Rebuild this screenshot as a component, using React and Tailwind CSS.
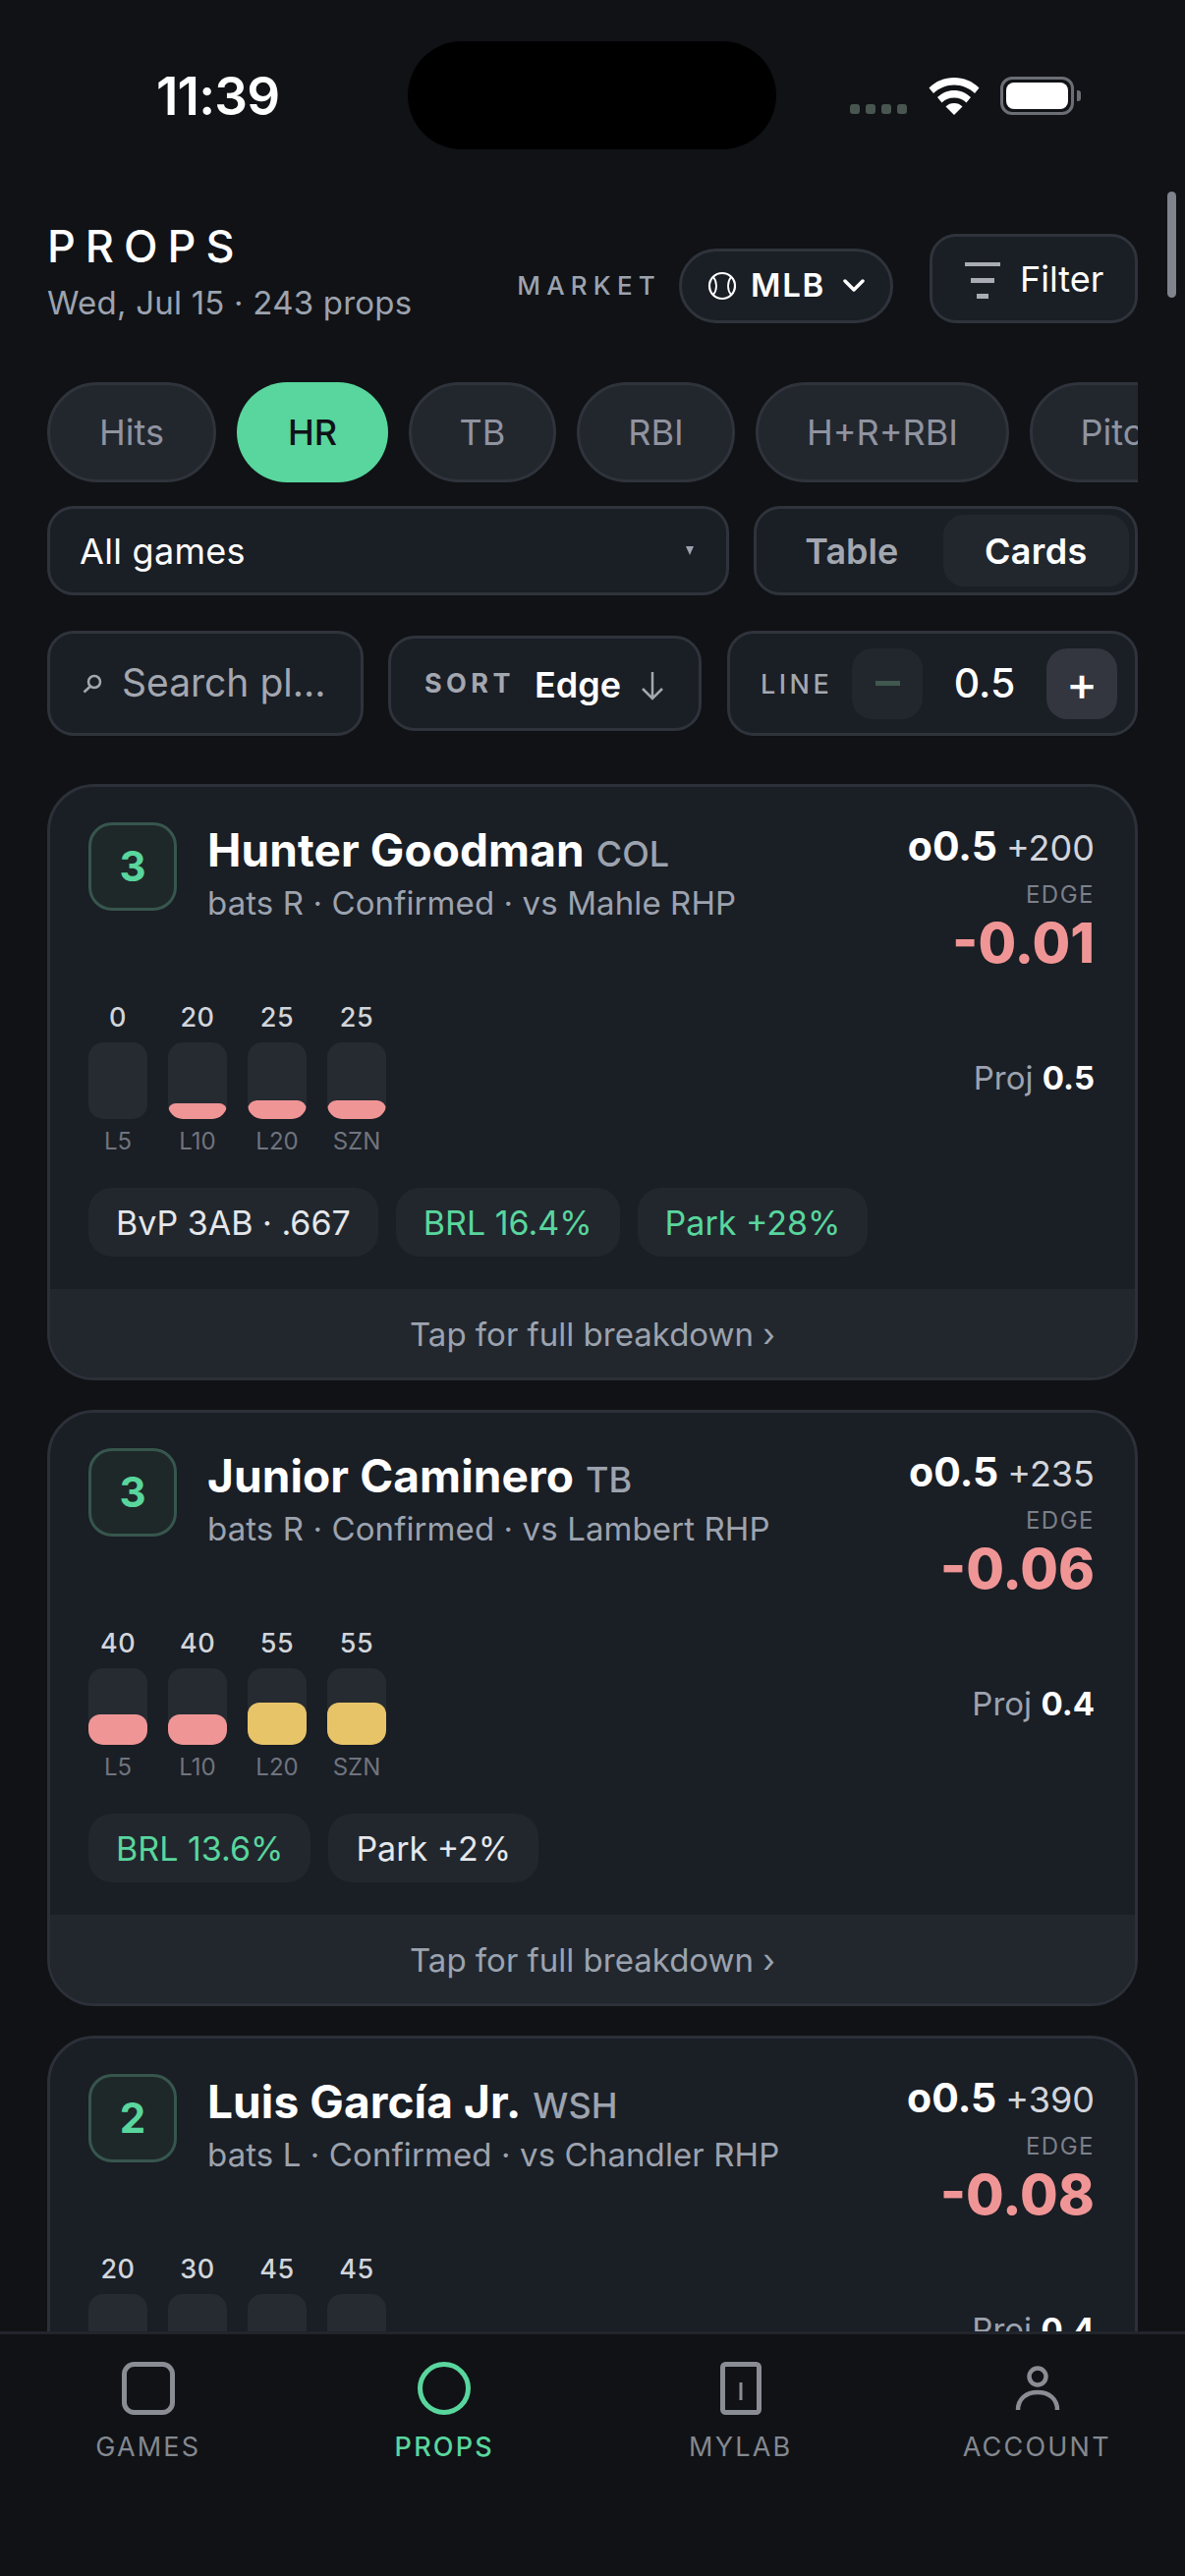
const cards = [
  { rank: 3, name: "Hunter Goodman", team: "COL", sub: "bats R · Confirmed · vs Mahle RHP", odds: "+200", edge: "-0.01", proj: "0.5",
    bars: [["0", 0, "L5"], ["20", 16, "L10"], ["25", 19, "L20"], ["25", 19, "SZN"]],
    chips: [["BvP 3AB · .667", false], ["BRL 16.4%", true], ["Park +28%", true]] },
  { rank: 3, name: "Junior Caminero", team: "TB", sub: "bats R · Confirmed · vs Lambert RHP", odds: "+235", edge: "-0.06", proj: "0.4",
    bars: [["40", 31, "L5"], ["40", 31, "L10"], ["55", 43, "L20"], ["55", 43, "SZN"]],
    chips: [["BRL 13.6%", true], ["Park +2%", false]] },
  { rank: 2, name: "Luis García Jr.", team: "WSH", sub: "bats L · Confirmed · vs Chandler RHP", odds: "+390", edge: "-0.08", proj: "0.4",
    bars: [["20", 16, "L5"], ["30", 23, "L10"], ["45", 35, "L20"], ["45", 35, "SZN"]],
    chips: [["BRL 11.2%", true], ["Park +5%", false]] },
];

function Card({ c }) {
  return (
    <div className="shrink-0 rounded-[48px] border-[3px] border-[#2c3038] bg-[#1a1e25] overflow-hidden">
      <div className="px-[39px] pt-[36px] pb-[33px]">
        <div className="flex justify-between h-[174px]">
          <div className="flex">
            <div className="w-[90px] h-[90px] rounded-[24px] border-[3px] border-[#37564d] bg-[#1e2829] flex items-center justify-center text-[42px] font-bold text-[#59d69d] leading-none">{c.rank}</div>
            <div className="ml-[31px] mt-[3px]">
              <div className="flex items-baseline leading-[50px]">
                <span className="text-[46px] tracking-[0.1px] font-bold text-white">{c.name}</span>
                <span className="ml-[12px] text-[36px] font-medium text-[#9ca3af]">{c.team}</span>
              </div>
              <div className="mt-[3px] text-[33px] tracking-[0.1px] leading-[44px] text-[#9ca3af]">{c.sub}</div>
            </div>
          </div>
          <div className="flex flex-col items-end mr-[2px]">
            <div className="flex items-baseline leading-[50px] -mt-[1px]">
              <span className="text-[41px] font-bold text-white">o0.5</span>
              <span className="ml-[9px] text-[36px] text-[#d1d5db]">{c.odds}</span>
            </div>
            <div className="mt-[9px] text-[24px] leading-[28px] tracking-[1.5px] text-[#7b808a]">EDGE</div>
            <div className="mt-[2px] text-[56px] font-extrabold leading-[66px] text-[#f09595]">{c.edge}</div>
          </div>
        </div>
        <div className="mt-[9px] flex justify-between items-center">
          <div className="flex gap-[21px]">
            {c.bars.map(([v, h, l]) => (
              <div key={l} className="w-[60px] flex flex-col items-center">
                <div className="text-[27px] leading-[32px] tracking-[0.5px] font-medium text-[#d1d5db]">{v}</div>
                <div className="mt-[9px] w-[60px] h-[78px] rounded-[15px] bg-[#262a31] overflow-hidden flex items-end">
                  <div
                    className={(parseInt(v) >= 50 ? "bg-[#e7c468]" : "bg-[#f09595]") + " w-full rounded-[12px]"}
                    style={{ height: h }}
                  />
                </div>
                <div className="mt-[9px] text-[24px] leading-[28px] text-[#6f747e] whitespace-nowrap">{l}</div>
              </div>
            ))}
          </div>
          <div className="text-[33px] text-[#9ca3af] mr-[2px]">Proj <span className="font-bold text-white">{c.proj}</span></div>
        </div>
        <div className="mt-[33px] flex gap-[18px]">
          {c.chips.map(([t, g]) => (
            <div key={t} className={"h-[70px] px-[28px] rounded-[24px] bg-[#22272e] flex items-center text-[34px] " + (g ? "text-[#59d69d]" : "text-[#e5e7eb]")}>{t}</div>
          ))}
        </div>
      </div>
      <div className="h-[90px] pt-[4px] bg-[#22272e] flex items-center justify-center text-[33px] text-[#9ca3af]">Tap for full breakdown ›</div>
    </div>
  );
}

const tabs = [
  ["Hits", "w-[172px]"],
  ["HR", "w-[154px]"],
  ["TB", "w-[150px]"],
  ["RBI", "w-[161px]"],
  ["H+R+RBI", "w-[258px]"],
  ["Pitcher Ks", "w-[276px]"],
];

function NavIcon({ children, active }) {
  return (
    <svg width="60" height="60" viewBox="0 0 60 60" fill="none" stroke={active ? "#59d69d" : "#8a8d94"} strokeWidth="5">
      {children}
    </svg>
  );
}

const navItems = [
  ["GAMES", "tracking-[2.2px]", <rect key="g" x="5.5" y="5.5" width="49" height="49" rx="10" />],
  ["PROPS", "tracking-[2.2px]", <circle key="p" cx="30" cy="30" r="24.5" />],
  ["MYLAB", "tracking-[2.2px]", <g key="m"><rect x="11.5" y="5.5" width="37" height="49" rx="3" /><path d="M30 24v18" strokeWidth="3" /></g>],
  ["ACCOUNT", "tracking-[2.2px]", <g key="a"><circle cx="31" cy="18" r="8.5" strokeWidth="4.5" /><path d="M11 52c0-11 8-18 20-18s20 7 20 18" strokeWidth="4.5" /></g>],
];

export default function App() {
  return (
    <div className="relative w-[1206px] h-[2622px] bg-[#101216] overflow-hidden flex flex-col font-['Inter',sans-serif]">
      <div className="h-[190px] shrink-0 flex items-start">
        <div className="ml-[159px] w-[130px] mt-[70px] text-[53px] leading-[56px] font-semibold text-white tracking-[-0.8px]">11:39</div>
        <div className="ml-[126px] mt-[42px] w-[375px] h-[110px] rounded-[55px] bg-black" />
        <div className="ml-[75px] mt-[106px] flex gap-[6px]">
          {[0, 1, 2, 3].map((i) => <div key={i} className="w-[10px] h-[10px] rounded-[3px] bg-[#48564f]" />)}
        </div>
        <svg className="ml-[22px] mt-[79px]" width="52" height="38" viewBox="0 0 52 38" fill="white">
          <path d="M26 0C16 0 7.5 3.5 0.5 10.5L5 16C11 10.5 18 7.5 26 7.5S41 10.5 47 16L51.5 10.5C44.5 3.5 36 0 26 0Z" />
          <path d="M26 13C19.5 13 14 15.5 9 20L13.5 25.5C17 22 21 20.5 26 20.5S35 22 38.5 25.5L43 20C38 15.5 32.5 13 26 13Z" />
          <path d="M26 26C22.5 26 20 27 17.5 29.5L26 38L34.5 29.5C32 27 29.5 26 26 26Z" />
        </svg>
        <div className="ml-[21px] mt-[78px] flex items-center">
          <div className="w-[75px] h-[39px] rounded-[12px] border-[3px] border-[#6b6e75] p-[3px]">
            <div className="w-full h-full rounded-[8px] bg-white" />
          </div>
          <div className="ml-[3px] w-[4px] h-[11px] rounded-r-[3px] bg-[#6b6e75]" />
        </div>
      </div>

      <div className="px-[48px] flex justify-between items-start h-[199px] shrink-0">
        <div className="pt-[34px]">
          <div className="text-[45px] leading-[54px] text-white font-medium tracking-[10px]">PROPS</div>
          <div className="mt-[8px] text-[33px] tracking-[0.22px] leading-[44px] text-[#9ca3af]">Wed, Jul 15 · 243 props</div>
        </div>
        <div className="flex items-start pt-[48px]">
          <div className="mt-[37px] text-[26px] leading-[32px] tracking-[6.2px] font-medium text-[#9ca3af]">MARKET</div>
          <div className="ml-[18px] mt-[15px] w-[218px] h-[76px] rounded-[38px] border-[3px] border-[#2f333b] bg-[#1a1e25] flex items-center pl-[26px]">
            <svg width="30" height="30" viewBox="0 0 30 30" fill="none" stroke="white" strokeWidth="2.2">
              <circle cx="15" cy="15" r="13" />
              <path d="M6 6C10 11 10 19 6 24M24 6C20 11 20 19 24 24" strokeWidth="1.8" />
            </svg>
            <span className="ml-[14px] text-[33px] font-semibold tracking-[1.7px] text-white">MLB</span>
            <svg className="ml-[18px]" width="22" height="14" viewBox="0 0 22 14" fill="none" stroke="white" strokeWidth="3.5" strokeLinecap="round" strokeLinejoin="round"><path d="M2 2l9 9 9-9" /></svg>
          </div>
          <div className="ml-[37px] w-[212px] h-[91px] rounded-[27px] border-[3px] border-[#2f333b] bg-[#1a1e25] flex items-center pl-[33px]">
            <svg width="36" height="40" viewBox="0 0 36 40" fill="#a9acb4" className="mt-[6px]">
              <rect x="0" y="0" width="36" height="4" />
              <rect x="6" y="16" width="24" height="5" />
              <rect x="12" y="32" width="12" height="5" />
            </svg>
            <span className="ml-[20px] text-[36px] text-white">Filter</span>
          </div>
        </div>
      </div>

      <div className="mx-[48px] flex gap-[21px] overflow-hidden h-[102px] shrink-0">
        {tabs.map(([t, w]) => (
          <div key={t} className={w + " h-[102px] shrink-0 rounded-[51px] flex items-center justify-center text-[36px] " + (t === "HR" ? "bg-[#59d69d] text-[#101216] font-medium" : "bg-[#22272e] border-[3px] border-[#2f333b] text-[#9093a0]")}>{t}</div>
        ))}
      </div>

      <div className="mx-[48px] mt-[24px] flex gap-[25px] h-[91px] shrink-0">
        <div className="flex-1 rounded-[27px] border-[3px] border-[#2f333b] bg-[#1a1e25] flex items-center justify-between pl-[30px] pr-[33px]">
          <span className="text-[36px] tracking-[0.3px] text-white">All games</span>
          <span className="w-0 h-0 border-l-[4.5px] border-r-[4.5px] border-t-[9px] border-l-transparent border-r-transparent border-t-[#9ca3af]" />
        </div>
        <div className="w-[391px] rounded-[27px] border-[3px] border-[#2f333b] bg-[#1a1e25] flex items-center p-[6px] text-[36px] font-semibold">
          <div className="w-[183px] mr-[2px] text-center text-[#a3a7b0]">Table</div>
          <div className="w-[191px] h-[73px] rounded-[21px] bg-[#22272e] flex items-center justify-center text-white tracking-[0.3px]">Cards</div>
        </div>
      </div>

      <div className="mx-[48px] mt-[36px] flex items-center h-[107px] shrink-0">
        <div className="w-[322px] h-[107px] rounded-[27px] border-[3px] border-[#2f333b] bg-[#1a1e25] flex items-center pl-[33px]">
          <svg width="20" height="20" viewBox="0 0 20 20" fill="none" stroke="#a3a7b0" strokeWidth="2.5"><circle cx="12" cy="8" r="6" /><path d="M8 12.5L1.5 18.5" /></svg>
          <span className="ml-[20px] text-[39px] text-[#a3a7b0]">Search pl...</span>
        </div>
        <div className="ml-[25px] w-[319px] h-[97px] rounded-[27px] border-[3px] border-[#2f333b] bg-[#1a1e25] flex items-center pl-[34px] pt-[2px]">
          <span className="w-[92px] shrink-0 text-[27px] font-bold tracking-[4.4px] text-[#a3a7b0]">SORT</span>
          <span className="ml-[20px] text-[36px] font-semibold text-white">Edge</span>
          <svg className="ml-[20px] mt-[3px]" width="24" height="30" viewBox="0 0 24 30" fill="none" stroke="#a3a7b0" strokeWidth="2.5"><path d="M12 1v27M2 18l10 10 10-10" /></svg>
        </div>
        <div className="ml-[26px] flex-1 h-[107px] rounded-[27px] border-[3px] border-[#2f333b] bg-[#1a1e25] flex items-center pl-[31px]">
          <span className="w-[93px] shrink-0 mt-[3px] text-[27px] tracking-[3.5px] font-medium text-[#a3a7b0]">LINE</span>
          <div className="w-[72px] h-[72px] rounded-[21px] bg-[#22272e] flex items-center justify-center">
            <div className="w-[25px] h-[5px] bg-[#40584f]" />
          </div>
          <div className="w-[126px] text-center text-[41px] font-medium text-white">0.5</div>
          <div className="w-[72px] h-[72px] rounded-[21px] bg-[#33363e] flex items-center justify-center text-[48px] font-medium text-white leading-none">+</div>
        </div>
      </div>

      <div className="flex-1 min-h-0 overflow-hidden mx-[48px] mt-[49px] flex flex-col gap-[30px]">
        {cards.map((c) => <Card key={c.name} c={c} />)}
      </div>

      <div className="h-[249px] shrink-0 bg-[#101216] border-t-[3px] border-[#22252b] grid grid-cols-4 items-start">
        {navItems.map(([label, track, icon]) => (
          <div key={label} className="flex flex-col items-center pt-[25px]">
            <NavIcon active={label === "PROPS"}>{icon}</NavIcon>
            <div className={"mt-[14px] text-[27px] leading-[32px] " + track + " " + (label === "PROPS" ? "text-[#59d69d] font-medium" : "text-[#84888f]")}>{label}</div>
          </div>
        ))}
      </div>

      <div className="absolute left-[1188px] top-[195px] w-[9px] h-[108px] rounded-full bg-[#7f838b]" />
    </div>
  );
}
